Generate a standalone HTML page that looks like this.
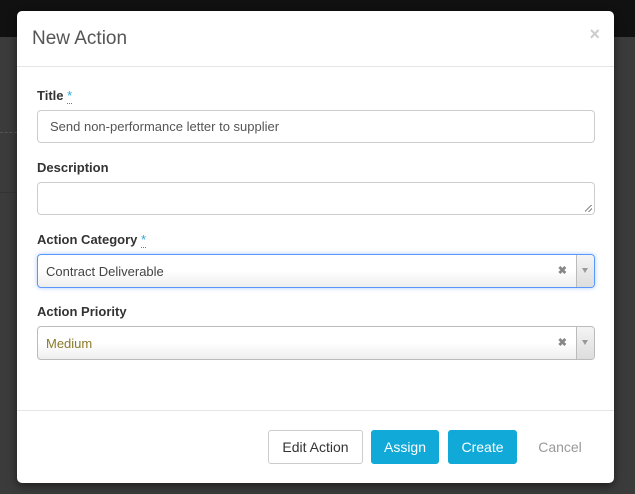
<!DOCTYPE html>
<html><head><meta charset="utf-8"><style>
*{box-sizing:border-box;margin:0;padding:0}
html,body{width:635px;height:494px;overflow:hidden}
body{background:#3b3b3b;font-family:"Liberation Sans",sans-serif;position:relative}
.top{position:absolute;left:0;top:0;width:635px;height:37px;background:#111}
.l1{position:absolute;left:0;top:132px;width:17px;border-top:1px dashed #555}
.l2{position:absolute;left:0;top:192px;width:17px;border-top:1px solid #333}
.modal{position:absolute;left:17px;top:11px;width:597px;height:472px;background:#fff;border-radius:5px;box-shadow:0 3px 9px rgba(0,0,0,.5)}
.h{position:absolute;left:15px;top:17px;font-size:19px;color:#555}
.x{position:absolute;right:14px;top:13px;font-size:18px;color:#ccc;font-weight:bold}
.hr{position:absolute;left:0;width:597px;border-top:1px solid #e5e5e5}
.lab{position:absolute;left:20px;font-size:13px;font-weight:bold;color:#333}
.lab span{color:#29a8e0;border-bottom:1px dotted #777;font-weight:normal}
.in{position:absolute;left:20px;width:558px;height:33px;border:1px solid #ccc;border-radius:4px;font-size:13px;color:#555;padding:8px 12px}
.grip{position:absolute;right:2px;bottom:2px;width:7px;height:7px;background:linear-gradient(135deg,transparent 40%,#888 40%,#888 50%,transparent 50%,transparent 70%,#888 70%,#888 80%,transparent 80%)}
.sel{position:absolute;left:20px;width:558px;height:34px;border:1px solid #aaa;border-radius:4px;background:linear-gradient(#fff 50%,#eee);font-size:13px;color:#444;padding:9px 8px}
.sel.f{border-color:#5897fb;box-shadow:0 0 4px rgba(88,151,251,.5)}
.sel .c{position:absolute;right:27px;top:9px;font-size:11px;color:#888;font-weight:bold}
.sel .a{position:absolute;right:0;top:0;width:18px;height:32px;border-left:1px solid #bbb;background:linear-gradient(#f4f4f4,#ddd);border-radius:0 4px 4px 0}
.sel .a:after{content:"";position:absolute;left:5px;top:13px;border:3px solid transparent;border-top:5px solid #999;border-bottom:0}
.b{position:absolute;top:419px;height:34px;border-radius:3px;font-size:14px;text-align:center;line-height:32px}
.bd{border:1px solid #ccc;color:#333;background:#fff}
.bp{background:#10a9d8;color:#fff;border:1px solid #10a9d8}
</style></head><body>
<div class="top"></div><div class="l1"></div><div class="l2"></div>
<div class="modal">
<div class="h">New Action</div><div class="x">×</div>
<div class="hr" style="top:55px"></div>
<div class="lab" style="top:77px">Title <span>*</span></div>
<div class="in" style="top:99px">Send non-performance letter to supplier</div>
<div class="lab" style="top:149px">Description</div>
<div class="in" style="top:171px"><div class="grip"></div></div>
<div class="lab" style="top:221px">Action Category <span>*</span></div>
<div class="sel f" style="top:243px">Contract Deliverable<div class="c">✖</div><div class="a"></div></div>
<div class="lab" style="top:293px">Action Priority</div>
<div class="sel" style="top:315px;color:#8a7a2a;border-color:#bbb">Medium<div class="c">✖</div><div class="a"></div></div>
<div class="hr" style="top:399px"></div>
<div class="b bd" style="left:251px;width:95px">Edit Action</div>
<div class="b bp" style="left:354px;width:68px">Assign</div>
<div class="b bp" style="left:431px;width:69px">Create</div>
<div class="b" style="left:512px;width:62px;color:#999;top:420px">Cancel</div>
</div>
</body></html>
